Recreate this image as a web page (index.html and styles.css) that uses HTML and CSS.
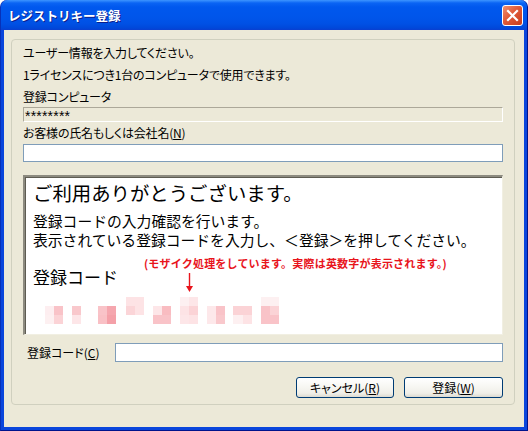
FILE: index.html
```
<!DOCTYPE html>
<html lang="ja">
<head>
<meta charset="utf-8">
<title>レジストリキー登録</title>
<link rel="stylesheet" href="styles.css">
</head>
<body>
<div class="window">
  <div class="titlebar">
    <span class="title">レジストリキー登録</span>
    <span class="close"><svg width="13" height="13" viewBox="0 0 13 13"><path d="M2 2 L11 11 M11 2 L2 11" stroke="#fff" stroke-width="2.2" stroke-linecap="square"/></svg></span>
  </div>
  <div class="client">
    <div class="group">
      <div class="line">ユーザー情報を入力してください。</div>
      <div class="line">1ライセンスにつき1台のコンピュータで使用できます。</div>
      <div class="line l3">登録コンピュータ</div>
      <div class="readonly"><span class="stars">********</span></div>
      <div class="line">お客様の氏名もしくは会社名(<u>N</u>)</div>
      <div class="input"></div>
      <div class="msgbox">
        <div class="m1">ご利用ありがとうございます。</div>
        <div class="m2">登録コードの入力確認を行います。</div>
        <div class="m3">表示されている登録コードを入力し、＜登録＞を押してください。</div>
        <div class="m4">登録コード</div>
        <svg class="mosaic" width="240" height="27" viewBox="0 0 240 27">
          <rect x="0" y="9" width="9" height="9" fill="#fdeef0"/>
          <rect x="9" y="9" width="9" height="9" fill="#f9c3c8"/>
          <rect x="0" y="18" width="9" height="9" fill="#fdf0f1"/>
          <rect x="9" y="18" width="9" height="9" fill="#fbd3d6"/>
          <rect x="27" y="9" width="9" height="9" fill="#f9c8cc"/>
          <rect x="27" y="18" width="9" height="9" fill="#fde6e8"/>
          <rect x="53" y="9" width="9" height="9" fill="#f9c3c8"/>
          <rect x="62" y="9" width="9" height="9" fill="#f5a6ae"/>
          <rect x="53" y="18" width="9" height="9" fill="#f9c0c5"/>
          <rect x="62" y="18" width="9" height="9" fill="#f4a0a8"/>
          <rect x="81" y="0" width="9" height="9" fill="#fde3e5"/>
          <rect x="90" y="0" width="9" height="9" fill="#fde3e5"/>
          <rect x="81" y="9" width="9" height="9" fill="#fbd5d8"/>
          <rect x="90" y="9" width="9" height="9" fill="#fde3e5"/>
          <rect x="108" y="9" width="9" height="9" fill="#fde6e8"/>
          <rect x="117" y="9" width="9" height="9" fill="#f9bcc1"/>
          <rect x="108" y="18" width="9" height="9" fill="#f9c3c8"/>
          <rect x="117" y="18" width="9" height="9" fill="#f9c3c8"/>
          <rect x="135" y="0" width="9" height="9" fill="#fdf0f1"/>
          <rect x="144" y="0" width="9" height="9" fill="#fde6e8"/>
          <rect x="135" y="9" width="9" height="9" fill="#fde3e5"/>
          <rect x="144" y="9" width="9" height="9" fill="#fbd3d6"/>
          <rect x="135" y="18" width="9" height="9" fill="#fde6e8"/>
          <rect x="144" y="18" width="9" height="9" fill="#fde3e5"/>
          <rect x="162" y="9" width="9" height="9" fill="#fde8ea"/>
          <rect x="171" y="9" width="9" height="9" fill="#f9c3c8"/>
          <rect x="162" y="18" width="9" height="9" fill="#fde8ea"/>
          <rect x="171" y="18" width="9" height="9" fill="#f9c8cc"/>
          <rect x="188" y="9" width="10" height="9" fill="#fbd3d6"/>
          <rect x="198" y="9" width="9" height="9" fill="#fbd3d6"/>
          <rect x="188" y="18" width="10" height="9" fill="#fdf0f1"/>
          <rect x="198" y="18" width="9" height="9" fill="#fde3e5"/>
          <rect x="216" y="0" width="9" height="9" fill="#fdf0f1"/>
          <rect x="225" y="0" width="9" height="9" fill="#fdf0f1"/>
          <rect x="216" y="9" width="9" height="9" fill="#f9c3c8"/>
          <rect x="225" y="9" width="9" height="9" fill="#fbd3d6"/>
          <rect x="216" y="18" width="9" height="9" fill="#f9c3c8"/>
          <rect x="225" y="18" width="9" height="9" fill="#f9c3c8"/>
        </svg>
        <div class="note">(モザイク処理をしています。実際は英数字が表示されます。)</div>
        <svg class="arrow" width="9" height="20" viewBox="0 0 9 20"><path d="M4.5 0 V15" stroke="#e8141c" stroke-width="1.4"/><path d="M1 13 L4.5 19 L8 13 Z" fill="#e8141c"/></svg>
      </div>
      <div class="coderow">
        <span class="codelabel">登録コード(<u>C</u>)</span>
        <div class="input codeinput"></div>
      </div>
      <div class="buttons">
        <div class="btn cancel">キャンセル(<u>R</u>)</div>
        <div class="btn ok">登録(<u>W</u>)</div>
      </div>
    </div>
  </div>
</div>
</body>
</html>
```
FILE: styles.css
```
html, body {
  margin: 0;
  padding: 0;
  background: #ffffff;
}
body {
  width: 528px;
  height: 431px;
  overflow: hidden;
  font-family: "Noto Sans CJK JP", sans-serif;
}
.window {
  width: 528px;
  height: 431px;
  box-sizing: border-box;
  background: #0a46dc;
  border-radius: 7px 7px 0 0;
  border-left: 1px solid #0831b8;
  border-right: 1px solid #00138c;
  border-bottom: 1px solid #00138c;
  display: flex;
  flex-direction: column;
}
.titlebar {
  height: 30px;
  flex: none;
  border-radius: 7px 7px 0 0;
  background: linear-gradient(to bottom, #3d95ff 0px, #0a64f4 3px, #0058ee 7px, #0055ea 18px, #0050e4 24px, #0048da 28px, #0a3fd0 30px);
  display: flex;
  align-items: center;
  justify-content: space-between;
  padding: 0 4px 0 7px;
  box-sizing: border-box;
}
.title {
  color: #ffffff;
  font-weight: bold;
  font-size: 12.5px;
  line-height: 14px;
  text-shadow: 1px 1px 0 #0a1e8c;
  margin-top: 1px;
}
.close {
  width: 19px;
  height: 19px;
  border: 1px solid #ffffff;
  border-radius: 3px;
  background: linear-gradient(135deg, #f09070 0%, #e05a38 45%, #c83c1c 100%);
  display: flex;
  align-items: center;
  justify-content: center;
  margin-top: 1px;
}
.client {
  flex: 1;
  margin: 0 3px 3px 3px;
  background: #ece9d8;
  padding: 9px 0 0 7px;
  box-sizing: border-box;
}
.group {
  width: 504px;
  height: 366px;
  box-sizing: border-box;
  border: 1px solid #d0d0bf;
  border-radius: 4px;
  padding: 2px 0 0 11px;
  font-size: 12px;
  color: #000000;
}
.line {
  height: 22px;
  line-height: 22px;
  font-feature-settings: "palt";
  letter-spacing: -0.2px;
  white-space: nowrap;
}
.l3 {
  height: 21px;
  line-height: 21px;
}
.readonly {
  width: 480px;
  height: 15px;
  box-sizing: border-box;
  border-top: 1px solid #aca899;
  border-left: 1px solid #aca899;
  border-right: 1px solid #ffffff;
  border-bottom: 1px solid #ffffff;
  padding: 0 0 0 1px;
  display: flex;
  align-items: flex-start;
}
.stars {
  font-family: "Liberation Sans", sans-serif;
  font-size: 14px;
  line-height: 14px;
  letter-spacing: 0.2px;
  margin-top: 1px;
}
.input {
  width: 480px;
  height: 18px;
  box-sizing: border-box;
  border: 1px solid #7f9db9;
  background: #ffffff;
}
.msgbox {
  position: relative;
  width: 480px;
  height: 160px;
  margin-top: 13px;
  box-sizing: border-box;
  background: #ffffff;
  border-top: 2px solid #8d8b80;
  border-left: 2px solid #8d8b80;
  border-right: 1px solid #f1efe2;
  border-bottom: 1px solid #f1efe2;
  box-shadow: inset 1px 1px 0 #5e5c52;
  padding: 1px 0 0 8px;
  color: #000000;
  white-space: nowrap;
}
.m1 {
  font-size: 19.4px;
  line-height: 30px;
  letter-spacing: 0;
}
.m2 {
  font-size: 14.8px;
  line-height: 19px;
  margin-top: 3px;
}
.m3 {
  font-size: 14.8px;
  line-height: 19px;
}
.m4 {
  font-size: 17px;
  line-height: 24px;
  margin-top: 16px;
}
.mosaic {
  display: block;
  margin: 8px 0 0 12px;
}
.note {
  position: absolute;
  left: 119px;
  top: 79px;
  color: #e8141c;
  font-size: 11px;
  font-weight: bold;
  line-height: 14px;
  letter-spacing: 0.2px;
}
.arrow {
  position: absolute;
  left: 160px;
  top: 96px;
}
.coderow {
  display: flex;
  align-items: center;
  margin-top: 8px;
  height: 19px;
}
.codelabel {
  width: 88px;
  margin-left: 4px;
  font-feature-settings: "palt";
  line-height: 19px;
}
.codeinput {
  width: 388px;
  height: 19px;
}
.buttons {
  display: flex;
  justify-content: flex-end;
  gap: 10px;
  width: 480px;
  margin-top: 15px;
}
.btn {
  height: 21px;
  box-sizing: border-box;
  border: 1px solid #003c74;
  border-radius: 3px;
  background: linear-gradient(to bottom, #ffffff 0%, #f8f8f4 40%, #f0efe8 80%, #dcdad0 100%);
  display: flex;
  align-items: center;
  justify-content: center;
  font-size: 12px;
  line-height: 19px;
  font-feature-settings: "palt";
}
.cancel {
  width: 98px;
}
.ok {
  width: 99px;
}
u {
  text-decoration: underline;
  text-underline-offset: 1px;
}
```
